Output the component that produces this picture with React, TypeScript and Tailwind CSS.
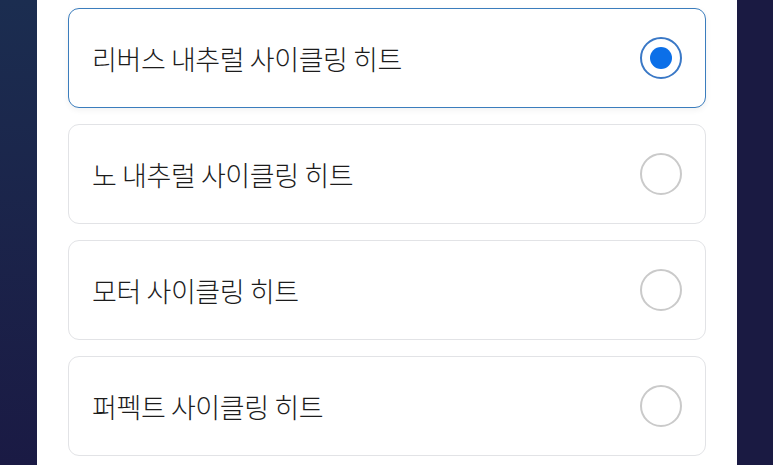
import { useState } from "react";

const options = [
  "리버스 내추럴 사이클링 히트",
  "노 내추럴 사이클링 히트",
  "모터 사이클링 히트",
  "퍼펙트 사이클링 히트",
];

export default function App() {
  const [selected, setSelected] = useState(0);

  return (
    <div
      className="flex h-[465px] w-[773px] overflow-hidden bg-gradient-to-b from-[#1b2d50] to-[#1a1a44]"
      style={{ fontFamily: '"Noto Sans CJK KR", "Noto Sans", sans-serif' }}
    >
      <div className="w-[37px] shrink-0" />
      <div className="flex w-[700px] shrink-0 flex-col gap-4 bg-white px-[31px] pt-2">
        {options.map((label, index) => {
          const active = index === selected;
          return (
            <button
              key={label}
              onClick={() => setSelected(index)}
              className={`flex h-[100px] shrink-0 items-center justify-between rounded-[11px] bg-white pl-[23px] pr-[23px] text-left ${
                active
                  ? "border-[1.5px] border-[#3b7dbd] shadow-[0_2px_6px_rgba(0,0,0,0.06)]"
                  : "border border-[#e2e3e6]"
              }`}
            >
              <span className="text-[27px] font-light leading-none tracking-[-0.4px] text-[#1c1c1c]">
                {label}
              </span>
              <span
                className={`flex h-[42px] w-[42px] items-center justify-center rounded-full border-2 ${
                  active ? "border-[#3a78c6]" : "border-[#cacaca]"
                }`}
              >
                {active && <span className="h-[22px] w-[22px] rounded-full bg-[#0b6fe8]" />}
              </span>
            </button>
          );
        })}
      </div>
      <div className="flex-1 bg-[#1a1a42]" />
    </div>
  );
}
